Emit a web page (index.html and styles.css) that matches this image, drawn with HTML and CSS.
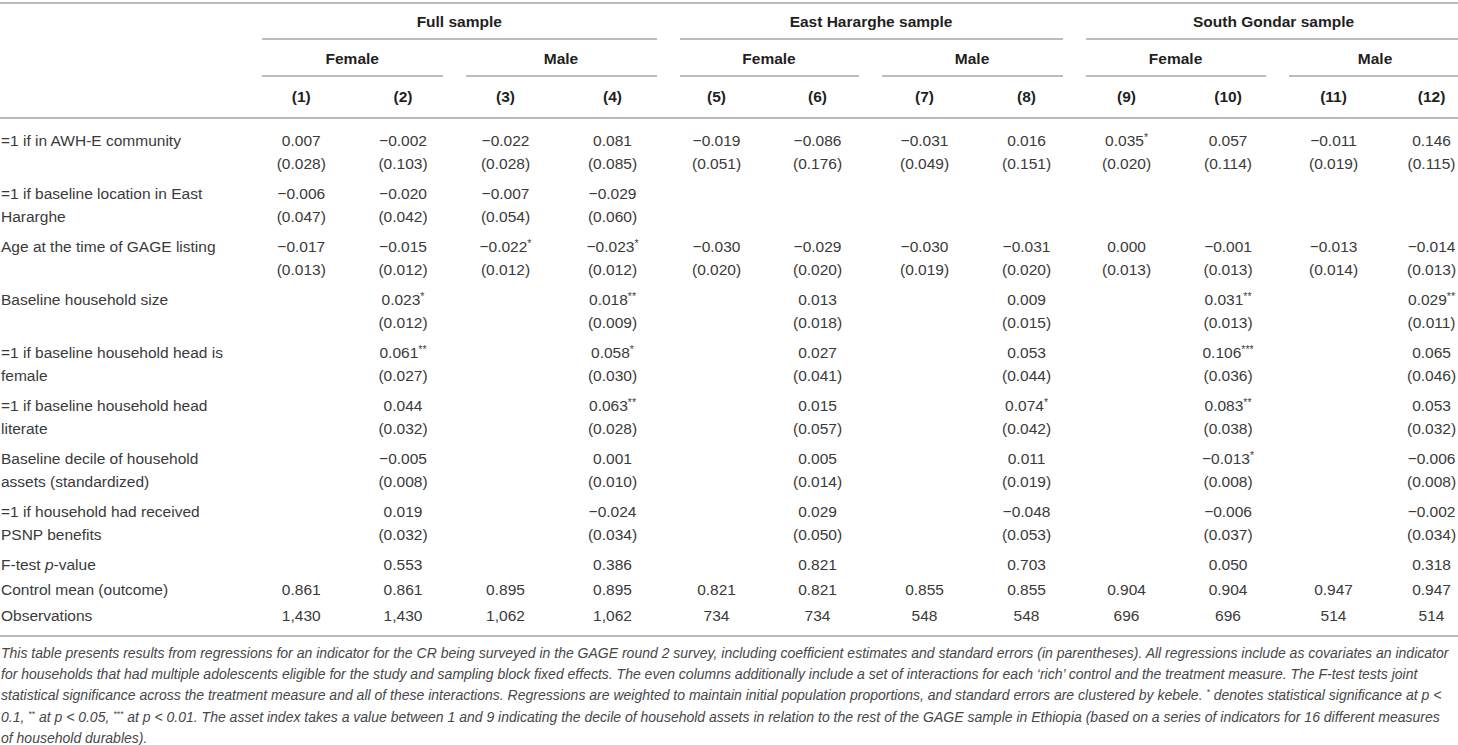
FILE: index.html
```html
<!DOCTYPE html>
<html lang="en">
<head>
<meta charset="utf-8">
<title>Regression table</title>
<link rel="stylesheet" href="styles.css">
</head>
<body>
<div class="wrap">
<table class="reg">
<colgroup>
<col class="c-lab">
<col class="c1"><col class="c2"><col class="c3"><col class="c4">
<col class="c5"><col class="c6"><col class="c7"><col class="c8">
<col class="c9"><col class="c10"><col class="c11"><col class="c12">
</colgroup>
<thead>
<tr class="h1">
<th></th>
<th colspan="4" class="grp"><div class="ul">Full sample</div></th>
<th colspan="4" class="grp"><div class="ul">East Hararghe sample</div></th>
<th colspan="4" class="grp lastgrp"><div class="ul">South Gondar sample</div></th>
</tr>
<tr class="h2">
<th></th>
<th colspan="2" class="grp"><div class="ul">Female</div></th>
<th colspan="2" class="grp"><div class="ul">Male</div></th>
<th colspan="2" class="grp"><div class="ul">Female</div></th>
<th colspan="2" class="grp"><div class="ul">Male</div></th>
<th colspan="2" class="grp"><div class="ul">Female</div></th>
<th colspan="2" class="grp lastgrp"><div class="ul">Male</div></th>
</tr>
<tr class="h3">
<th></th>
<th>(1)</th><th>(2)</th><th>(3)</th><th>(4)</th><th>(5)</th><th>(6)</th>
<th>(7)</th><th>(8)</th><th>(9)</th><th>(10)</th><th>(11)</th><th>(12)</th>
</tr>
</thead>
<tbody>
<tr class="first">
<td class="lab">=1 if in AWH-E community</td>
<td>0.007<br>(0.028)</td><td>−0.002<br>(0.103)</td><td>−0.022<br>(0.028)</td><td>0.081<br>(0.085)</td>
<td>−0.019<br>(0.051)</td><td>−0.086<br>(0.176)</td><td>−0.031<br>(0.049)</td><td>0.016<br>(0.151)</td>
<td>0.035<sup>*</sup><br>(0.020)</td><td>0.057<br>(0.114)</td><td>−0.011<br>(0.019)</td><td>0.146<br>(0.115)</td>
</tr>
<tr>
<td class="lab">=1 if baseline location in East<br>Hararghe</td>
<td>−0.006<br>(0.047)</td><td>−0.020<br>(0.042)</td><td>−0.007<br>(0.054)</td><td>−0.029<br>(0.060)</td>
<td></td><td></td><td></td><td></td><td></td><td></td><td></td><td></td>
</tr>
<tr>
<td class="lab">Age at the time of GAGE listing</td>
<td>−0.017<br>(0.013)</td><td>−0.015<br>(0.012)</td><td>−0.022<sup>*</sup><br>(0.012)</td><td>−0.023<sup>*</sup><br>(0.012)</td>
<td>−0.030<br>(0.020)</td><td>−0.029<br>(0.020)</td><td>−0.030<br>(0.019)</td><td>−0.031<br>(0.020)</td>
<td>0.000<br>(0.013)</td><td>−0.001<br>(0.013)</td><td>−0.013<br>(0.014)</td><td>−0.014<br>(0.013)</td>
</tr>
<tr>
<td class="lab">Baseline household size</td>
<td></td><td>0.023<sup>*</sup><br>(0.012)</td><td></td><td>0.018<sup>**</sup><br>(0.009)</td>
<td></td><td>0.013<br>(0.018)</td><td></td><td>0.009<br>(0.015)</td>
<td></td><td>0.031<sup>**</sup><br>(0.013)</td><td></td><td>0.029<sup>**</sup><br>(0.011)</td>
</tr>
<tr>
<td class="lab">=1 if baseline household head is<br>female</td>
<td></td><td>0.061<sup>**</sup><br>(0.027)</td><td></td><td>0.058<sup>*</sup><br>(0.030)</td>
<td></td><td>0.027<br>(0.041)</td><td></td><td>0.053<br>(0.044)</td>
<td></td><td>0.106<sup>***</sup><br>(0.036)</td><td></td><td>0.065<br>(0.046)</td>
</tr>
<tr>
<td class="lab">=1 if baseline household head<br>literate</td>
<td></td><td>0.044<br>(0.032)</td><td></td><td>0.063<sup>**</sup><br>(0.028)</td>
<td></td><td>0.015<br>(0.057)</td><td></td><td>0.074<sup>*</sup><br>(0.042)</td>
<td></td><td>0.083<sup>**</sup><br>(0.038)</td><td></td><td>0.053<br>(0.032)</td>
</tr>
<tr>
<td class="lab">Baseline decile of household<br>assets (standardized)</td>
<td></td><td>−0.005<br>(0.008)</td><td></td><td>0.001<br>(0.010)</td>
<td></td><td>0.005<br>(0.014)</td><td></td><td>0.011<br>(0.019)</td>
<td></td><td>−0.013<sup>*</sup><br>(0.008)</td><td></td><td>−0.006<br>(0.008)</td>
</tr>
<tr>
<td class="lab">=1 if household had received<br>PSNP benefits</td>
<td></td><td>0.019<br>(0.032)</td><td></td><td>−0.024<br>(0.034)</td>
<td></td><td>0.029<br>(0.050)</td><td></td><td>−0.048<br>(0.053)</td>
<td></td><td>−0.006<br>(0.037)</td><td></td><td>−0.002<br>(0.034)</td>
</tr>
<tr class="ft">
<td class="lab">F-test <i>p</i>-value</td>
<td></td><td>0.553</td><td></td><td>0.386</td>
<td></td><td>0.821</td><td></td><td>0.703</td>
<td></td><td>0.050</td><td></td><td>0.318</td>
</tr>
<tr class="one">
<td class="lab">Control mean (outcome)</td>
<td>0.861</td><td>0.861</td><td>0.895</td><td>0.895</td>
<td>0.821</td><td>0.821</td><td>0.855</td><td>0.855</td>
<td>0.904</td><td>0.904</td><td>0.947</td><td>0.947</td>
</tr>
<tr class="one last">
<td class="lab">Observations</td>
<td>1,430</td><td>1,430</td><td>1,062</td><td>1,062</td>
<td>734</td><td>734</td><td>548</td><td>548</td>
<td>696</td><td>696</td><td>514</td><td>514</td>
</tr>
</tbody>
</table>
</div>
<p class="note">
<span>This table presents results from regressions for an indicator for the CR being surveyed in the GAGE round 2 survey, including coefficient estimates and standard errors (in parentheses). All regressions include as covariates an indicator</span>
<span>for households that had multiple adolescents eligible for the study and sampling block fixed effects. The even columns additionally include a set of interactions for each ‘rich’ control and the treatment measure. The F-test tests joint</span>
<span>statistical significance across the treatment measure and all of these interactions. Regressions are weighted to maintain initial population proportions, and standard errors are clustered by kebele. <sup>*</sup> denotes statistical significance at p &lt;</span>
<span>0.1, <sup>**</sup> at p &lt; 0.05, <sup>***</sup> at p &lt; 0.01. The asset index takes a value between 1 and 9 indicating the decile of household assets in relation to the rest of the GAGE sample in Ethiopia (based on a series of indicators for 16 different measures</span>
<span>of household durables).</span>
</p>
</body>
</html>
```

FILE: styles.css
```css
html, body {
  margin: 0;
  padding: 0;
  background: #ffffff;
}

body {
  font-family: "Liberation Sans", Arial, sans-serif;
  color: #3a3a3a;
}

.wrap {
  width: 1458px;
  overflow: hidden;
  padding-top: 2px;
}

.reg {
  border-collapse: separate;
  border-spacing: 0;
  table-layout: fixed;
  width: 1472.5px;
  font-size: 15.5px;
  border-top: 2px solid #b9b9b9;
}

.c-lab { width: 250.5px; }
.c1 { width: 101.5px; }
.c2 { width: 102px; }
.c3 { width: 103px; }
.c4 { width: 111px; }
.c5 { width: 97px; }
.c6 { width: 105px; }
.c7 { width: 109px; }
.c8 { width: 95px; }
.c9 { width: 105px; }
.c10 { width: 98px; }
.c11 { width: 113px; }
.c12 { width: 83px; }

.reg th {
  font-weight: bold;
  color: #1f1f1f;
  text-align: center;
  padding: 0;
  line-height: 20px;
}

.reg th.grp {
  padding: 0 11.5px;
}

.ul {
  border-bottom: 2px solid #bdbdbd;
}

.h1 .ul {
  padding: 8px 0 6px;
}

.h2 .ul {
  padding: 9px 0 6px;
}

.h3 th {
  padding: 10px 0;
  border-bottom: 2px solid #b9b9b9;
}

.reg td {
  padding: 3.5px 0;
  line-height: 23px;
  text-align: center;
  vertical-align: top;
  white-space: nowrap;
}

.reg td.lab {
  text-align: left;
  padding-left: 1px;
}

.reg tr.first td {
  padding-top: 9.5px;
}

.reg tr.ft td {
  padding-bottom: 0;
}

.reg tr.one td {
  padding-top: 2px;
  padding-bottom: 1.5px;
}

.reg tr.last td {
  padding-bottom: 7.5px;
  border-bottom: 2px solid #b9b9b9;
}

.reg sup {
  font-size: 0.68em;
  line-height: 0;
  vertical-align: 0.45em;
}

.note {
  margin: 0;
  padding: 6px 0 0 1px;
  font-style: italic;
  font-size: 14px;
  line-height: 21.4px;
  color: #474747;
}

.note span {
  display: block;
  white-space: nowrap;
}

.note sup {
  font-size: 0.62em;
  line-height: 0;
  vertical-align: 0.55em;
}
```
